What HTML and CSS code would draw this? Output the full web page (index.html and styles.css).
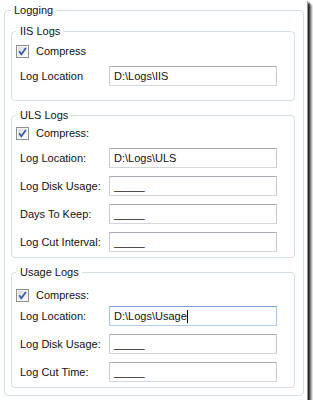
FILE: index.html
```html
<!DOCTYPE html>
<html>
<head>
<meta charset="utf-8">
<link rel="stylesheet" href="styles.css">
</head>
<body>
<div class="window">
  <fieldset class="group outer">
    <legend>Logging</legend>

    <fieldset class="group sub iis">
      <legend>IIS Logs</legend>
      <div class="check-row">
        <svg class="cb" width="13" height="13" viewBox="0 0 13 13"><defs><linearGradient id="cbg" x1="0" y1="0" x2="1" y2="1"><stop offset="0" stop-color="#d9dbde"/><stop offset="1" stop-color="#fafafa"/></linearGradient></defs><rect x="0.5" y="0.5" width="12" height="12" fill="#f6f6f6" stroke="#8e8f8f"/><rect x="2" y="2" width="9" height="9" fill="url(#cbg)"/><path d="M3.2 6.3 L5.3 9.2 L9.9 3.1" fill="none" stroke="#3a55a8" stroke-width="1.7"/></svg>
        <span>Compress</span>
      </div>
      <div class="field">
        <span class="lbl">Log Location</span>
        <div class="box">D:\Logs\IIS</div>
      </div>
    </fieldset>

    <fieldset class="group sub uls">
      <legend>ULS Logs</legend>
      <div class="check-row">
        <svg class="cb" width="13" height="13" viewBox="0 0 13 13"><rect x="0.5" y="0.5" width="12" height="12" fill="#f6f6f6" stroke="#8e8f8f"/><rect x="2" y="2" width="9" height="9" fill="url(#cbg)"/><path d="M3.2 6.3 L5.3 9.2 L9.9 3.1" fill="none" stroke="#3a55a8" stroke-width="1.7"/></svg>
        <span>Compress:</span>
      </div>
      <div class="field">
        <span class="lbl">Log Location:</span>
        <div class="box">D:\Logs\ULS</div>
      </div>
      <div class="field">
        <span class="lbl">Log Disk Usage:</span>
        <div class="box">_____</div>
      </div>
      <div class="field">
        <span class="lbl">Days To Keep:</span>
        <div class="box">_____</div>
      </div>
      <div class="field">
        <span class="lbl">Log Cut Interval:</span>
        <div class="box">_____</div>
      </div>
    </fieldset>

    <fieldset class="group sub usage">
      <legend>Usage Logs</legend>
      <div class="check-row">
        <svg class="cb" width="13" height="13" viewBox="0 0 13 13"><rect x="0.5" y="0.5" width="12" height="12" fill="#f6f6f6" stroke="#8e8f8f"/><rect x="2" y="2" width="9" height="9" fill="url(#cbg)"/><path d="M3.2 6.3 L5.3 9.2 L9.9 3.1" fill="none" stroke="#3a55a8" stroke-width="1.7"/></svg>
        <span>Compress:</span>
      </div>
      <div class="field">
        <span class="lbl">Log Location:</span>
        <div class="box focus">D:\Logs\Usage<span class="caret"></span></div>
      </div>
      <div class="field">
        <span class="lbl">Log Disk Usage:</span>
        <div class="box">_____</div>
      </div>
      <div class="field">
        <span class="lbl">Log Cut Time:</span>
        <div class="box">_____</div>
      </div>
    </fieldset>
  </fieldset>
</div>
</body>
</html>
```

FILE: styles.css
```css
* { box-sizing: border-box; }

body {
  margin: 0;
  background: #ffffff;
  font-family: "Liberation Sans", Arial, sans-serif;
  font-size: 11px;
  line-height: 13px;
  color: #111111;
}

.window {
  width: 307px;
  height: 400px;
  background: #ffffff;
  padding: 4px 3px 0 4px;
  box-shadow: 1px 1px 0 #9a9a9a, 3px 3px 2px rgba(0, 0, 0, 0.85), 5px 5px 2px rgba(0, 0, 0, 0.35);
}

.group {
  margin: 0;
  min-width: 0;
  border: 1px solid #d5dde5;
  border-radius: 4px;
}

.group > legend {
  padding: 0 3px;
  line-height: 13px;
}

.outer {
  width: 300px;
  height: 392px;
  padding: 8px 9px 7px 6px;
}

.sub {
  width: 284px;
  padding: 0 16px 5px 4px;
}

.sub > legend {
  padding: 0 3px 0 4px;
}

.iis { padding-top: 7px; padding-bottom: 14px; }
.uls { margin-top: 8px; padding-top: 5px; }
.usage { margin-top: 8px; padding-top: 10px; }

.check-row {
  display: flex;
  align-items: center;
  gap: 7px;
  height: 13px;
}

.cb { display: block; flex: none; }

.field {
  display: flex;
  align-items: center;
  height: 20px;
  margin-top: 8px;
}

.usage .check-row + .field { margin-top: 4px; }

.lbl {
  width: 93px;
  padding-left: 4px;
  flex: none;
}

.box {
  width: 168px;
  height: 20px;
  border: 1px solid;
  border-color: #a9acb2 #c9ccd1 #d2d5da #c9ccd1;
  background: #ffffff;
  padding-left: 4px;
  line-height: 18px;
  color: #111;
  white-space: nowrap;
}

.box.focus {
  border-color: #7aa3d4 #a9c6e8 #b4cdeb #a9c6e8;
}

.caret {
  display: inline-block;
  width: 1px;
  height: 13px;
  background: #000;
  vertical-align: -3px;
}
```
